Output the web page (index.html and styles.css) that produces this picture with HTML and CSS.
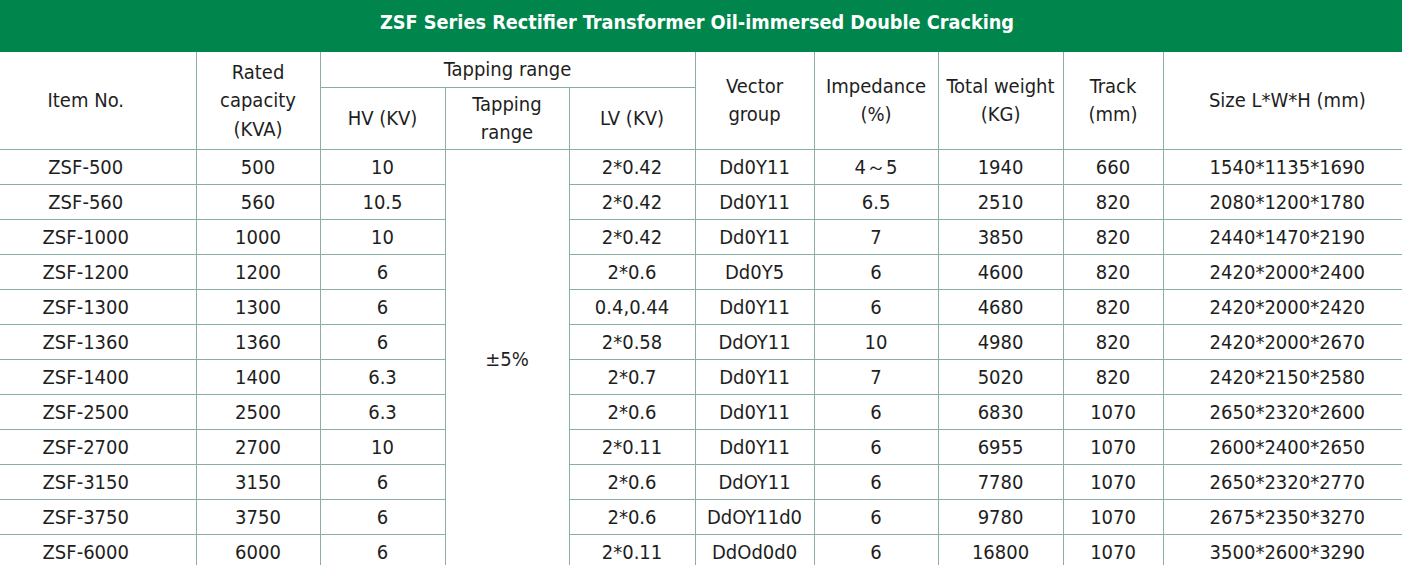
FILE: index.html
```html
<!DOCTYPE html>
<html>
<head>
<meta charset="utf-8">
<link rel="stylesheet" href="styles.css">
</head>
<body>
<div class="title">ZSF Series Rectifier Transformer Oil-immersed Double Cracking</div>
<table class="spec">
<colgroup>
<col class="c1"><col class="c2"><col class="c3"><col class="c4"><col class="c5"><col class="c6"><col class="c7"><col class="c8"><col class="c9"><col class="c10">
</colgroup>
<thead>
<tr class="h1">
<th rowspan="2" class="first">Item No.</th>
<th rowspan="2">Rated<br>capacity<br>(KVA)</th>
<th colspan="3">Tapping range</th>
<th rowspan="2">Vector<br>group</th>
<th rowspan="2">Impedance<br>(%)</th>
<th rowspan="2">Total weight<br>(KG)</th>
<th rowspan="2">Track<br>(mm)</th>
<th rowspan="2" class="last">Size L*W*H (mm)</th>
</tr>
<tr class="h2">
<th>HV (KV)</th>
<th>Tapping<br>range</th>
<th>LV (KV)</th>
</tr>
</thead>
<tbody>
<tr><td class="first">ZSF-500</td><td>500</td><td>10</td><td rowspan="12" class="merged">±5%</td><td>2*0.42</td><td>Dd0Y11</td><td>4～5</td><td>1940</td><td>660</td><td class="last">1540*1135*1690</td></tr>
<tr><td class="first">ZSF-560</td><td>560</td><td>10.5</td><td>2*0.42</td><td>Dd0Y11</td><td>6.5</td><td>2510</td><td>820</td><td class="last">2080*1200*1780</td></tr>
<tr><td class="first">ZSF-1000</td><td>1000</td><td>10</td><td>2*0.42</td><td>Dd0Y11</td><td>7</td><td>3850</td><td>820</td><td class="last">2440*1470*2190</td></tr>
<tr><td class="first">ZSF-1200</td><td>1200</td><td>6</td><td>2*0.6</td><td>Dd0Y5</td><td>6</td><td>4600</td><td>820</td><td class="last">2420*2000*2400</td></tr>
<tr><td class="first">ZSF-1300</td><td>1300</td><td>6</td><td>0.4,0.44</td><td>Dd0Y11</td><td>6</td><td>4680</td><td>820</td><td class="last">2420*2000*2420</td></tr>
<tr><td class="first">ZSF-1360</td><td>1360</td><td>6</td><td>2*0.58</td><td>DdOY11</td><td>10</td><td>4980</td><td>820</td><td class="last">2420*2000*2670</td></tr>
<tr><td class="first">ZSF-1400</td><td>1400</td><td>6.3</td><td>2*0.7</td><td>Dd0Y11</td><td>7</td><td>5020</td><td>820</td><td class="last">2420*2150*2580</td></tr>
<tr><td class="first">ZSF-2500</td><td>2500</td><td>6.3</td><td>2*0.6</td><td>Dd0Y11</td><td>6</td><td>6830</td><td>1070</td><td class="last">2650*2320*2600</td></tr>
<tr><td class="first">ZSF-2700</td><td>2700</td><td>10</td><td>2*0.11</td><td>Dd0Y11</td><td>6</td><td>6955</td><td>1070</td><td class="last">2600*2400*2650</td></tr>
<tr><td class="first">ZSF-3150</td><td>3150</td><td>6</td><td>2*0.6</td><td>DdOY11</td><td>6</td><td>7780</td><td>1070</td><td class="last">2650*2320*2770</td></tr>
<tr><td class="first">ZSF-3750</td><td>3750</td><td>6</td><td>2*0.6</td><td>DdOY11d0</td><td>6</td><td>9780</td><td>1070</td><td class="last">2675*2350*3270</td></tr>
<tr><td class="first">ZSF-6000</td><td>6000</td><td>6</td><td>2*0.11</td><td>DdOd0d0</td><td>6</td><td>16800</td><td>1070</td><td class="last">3500*2600*3290</td></tr>
</tbody>
</table>
</body>
</html>
```

FILE: styles.css
```css
html, body {
  margin: 0;
  padding: 0;
  background: #ffffff;
}
body {
  font-family: "DejaVu Sans Condensed", "DejaVu Sans", sans-serif;
  color: #1e1e1e;
  width: 1402px;
  overflow: hidden;
}
.title {
  height: 52px;
  background: #00864c;
  color: #ffffff;
  font-weight: bold;
  font-size: 19.7px;
  display: flex;
  align-items: center;
  justify-content: center;
  padding-bottom: 8px;
  padding-right: 8px;
  box-sizing: border-box;
}
.spec {
  width: 1402px;
  border-collapse: collapse;
  table-layout: fixed;
  font-size: 20px;
}
.c1 { width: 196px; }
.c2 { width: 124px; }
.c3 { width: 125px; }
.c4 { width: 124px; }
.c5 { width: 126px; }
.c6 { width: 119px; }
.c7 { width: 124px; }
.c8 { width: 125px; }
.c9 { width: 100px; }
.c10 { width: 239px; }
.spec th, .spec td {
  border: 1px solid #88aea6;
  text-align: center;
  vertical-align: middle;
  padding: 0;
  font-weight: normal;
}
.spec thead tr:first-child th {
  border-top: none;
}
.spec th.first, .spec td.first { border-left: none; padding-right: 24px; }
.spec th.last, .spec td.last { border-right: none; padding-left: 9px; }
.spec th {
  line-height: 28.5px;
}
.h1 { height: 35px; }
.h2 { height: 62px; }
.spec tbody tr { height: 35px; }
.spec td { line-height: 22px; padding-top: 1px; }
.spec td.merged { padding-top: 0; }
```
